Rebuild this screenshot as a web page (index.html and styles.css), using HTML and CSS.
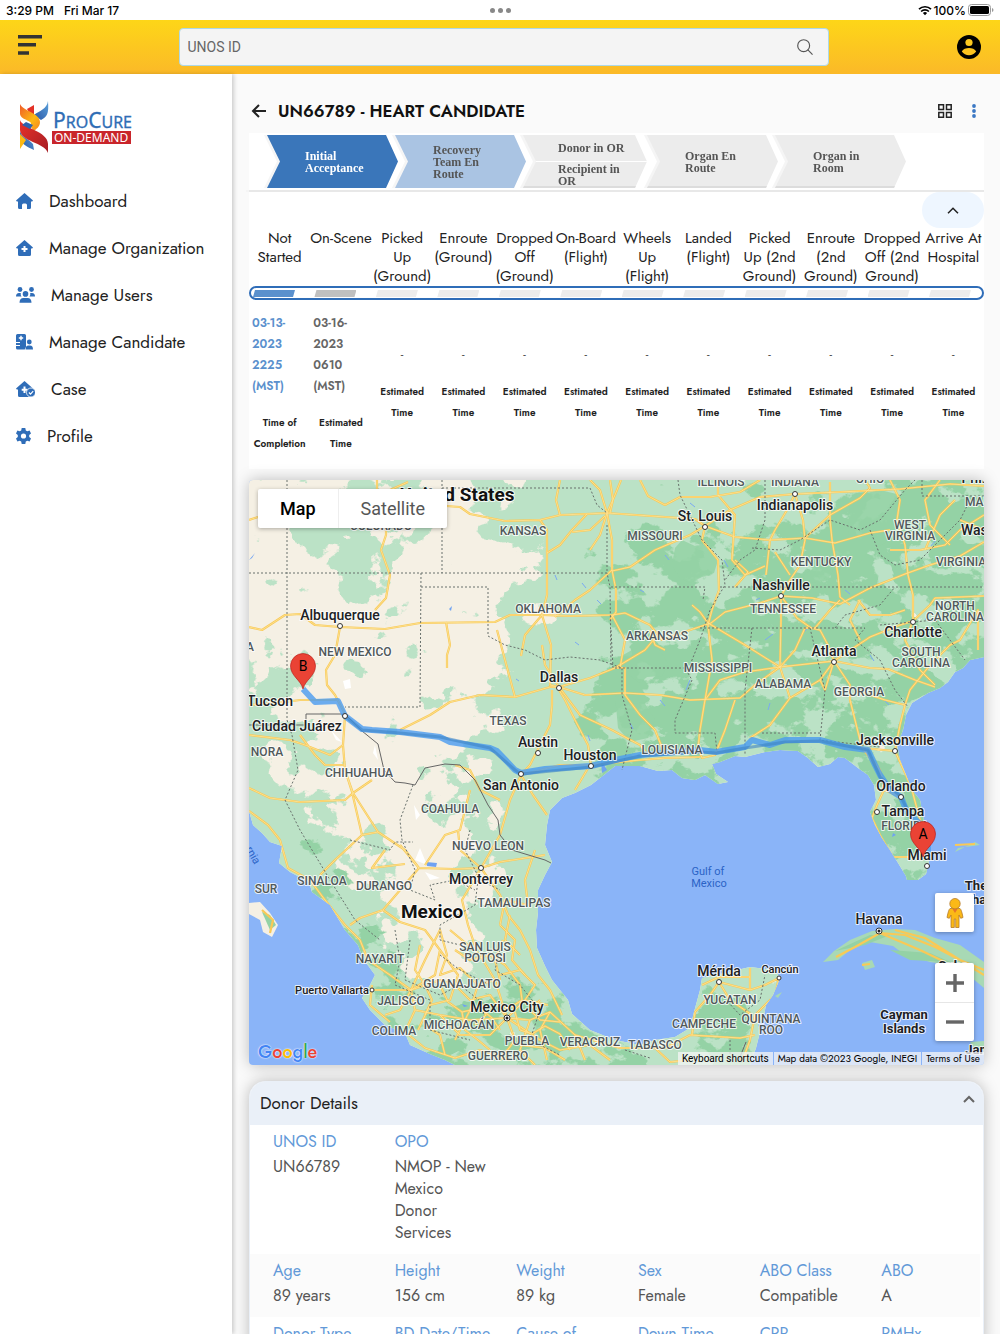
FILE: index.html
```html
<!DOCTYPE html>
<html lang="en">
  <head>
    <title>ProCure On-Demand</title>
    <meta charset="UTF-8">
    <meta name="viewport" content="width=device-width, initial-scale=1">
    <link rel="stylesheet" href="styles.css">
  </head>

  <body>
    <div class="status-bar">
      <div class="status-left"><span>3:29 PM</span><span>Fri Mar 17</span></div>
      <div class="status-dots"><i></i><i></i><i></i></div>
      <div class="status-right">
        <svg width="14" height="11" viewBox="0 0 14 11" fill="none" stroke="#000" stroke-width="1.7">
          <path d="M1 4.2a8.6 8.6 0 0 1 12 0M3.1 6.5a5.6 5.6 0 0 1 7.8 0"/>
          <path d="M7 10.3 4.9 8.1a3 3 0 0 1 4.2 0z" fill="#000" stroke="none"/>
        </svg>
        <span>100%</span>
        <svg width="26" height="12" viewBox="0 0 26 12">
          <rect x=".5" y=".5" width="22" height="11" rx="3" fill="none" stroke="#999"/>
          <rect x="2" y="2" width="19" height="8" rx="1.6"/>
          <path d="M24 4v4q1.500-.6 1.500-2T24 4z" fill="#999"/>
        </svg>
      </div>
    </div>

    <header class="topbar">
      <button class="menu-btn" type="button" aria-label="Menu">
        <svg width="24" height="20" viewBox="0 0 24 20" fill="#333"><path d="M0 0h24v3.400H0zM0 8h18v3.400H0zM0 16.300h11v3.400H0z"/></svg>
      </button>
      <form class="search">
        <input type="text" placeholder="UNOS ID" aria-label="UNOS ID">
        <button type="button" aria-label="Search">
          <svg width="16" height="16" viewBox="0 0 18 18" fill="none" stroke="#555" stroke-width="1.300"><circle cx="7.500" cy="7.500" r="6.700"/><path d="m12 12 5.500 5.500"/></svg>
        </button>
      </form>
      <button class="user-btn" type="button" aria-label="Account">
        <svg width="24" height="24" viewBox="0 0 24 24">
          <circle cx="12" cy="12" r="12"/>
          <circle cx="12" cy="7.500" r="3.600" fill="#fcc81f"/>
          <path d="M4.800 16.500c1-2.300 4.400-3.400 7.200-3.400s6.200 1.100 7.200 3.400a8.700 8.700 0 0 1-14.400 0z" fill="#fcc31f"/>
        </svg>
      </button>
    </header>

    <div class="layout">
      <aside class="sidebar">
        <a class="logo" href="#" aria-label="ProCure On-Demand">
          <svg width="113" height="54" viewBox="0 0 113 54">
            <defs>
              <linearGradient id="lr" x1="0" y1="0" x2="1" y2="1"><stop offset="0" stop-color="#e8322a"/><stop offset="1" stop-color="#a51d24"/></linearGradient>
              <linearGradient id="ly" x1="0" y1="0" x2="1" y2="1"><stop offset="0" stop-color="#ef5a28"/><stop offset=".6" stop-color="#fdb913"/><stop offset="1" stop-color="#f58220"/></linearGradient>
              <linearGradient id="lb" x1="0" y1="1" x2="1" y2="0"><stop offset="0" stop-color="#2b56a5"/><stop offset="1" stop-color="#5aa2dc"/></linearGradient>
            </defs>
            <path d="M29 1C28 9 20 11 15 15l7 5c6-3 8-6 7-19z" fill="url(#lb)"/>
            <path d="M1 29c0 8 8 9 13 15l1 6C8 47 3 44 1 39z" fill="url(#lb)"/>
            <path d="M8 9l7-4v9l-4 0z" fill="#e33127"/>
            <path d="M1 4c3 7 20 9 20 18 0 5-4 7-6 9l-4-5c5-6-9-5-10-12z" fill="url(#ly)"/>
            <path d="M1 34l6 6-6 9z" fill="#fdb913"/>
            <path d="M1 20c2 8 28 11 28 24v9C25 42 2 42 1 30z" fill="url(#lr)"/>
            <path d="M7 22l7 3-3 4-8-4z" fill="#2f62ae"/>
            <text class="logo-name" x="34" y="28"><tspan class="cap">P</tspan>RO<tspan class="cap">C</tspan>URE</text>
            <rect x="33" y="31" width="79" height="13" fill="#c9252b"/>
            <text class="logo-sub" x="35" y="42">ON-DEMAND</text>
          </svg>
        </a>
        <nav>
          <a href="#">
            <svg width="17" height="16" viewBox="0 0 17 16"><path d="M8.500 0 17 7.400l-.8 1.200H15V14.500q0 1.500-1.500 1.500H11v-4q0-1.500-1.500-1.500h-2Q6 10.500 6 12v4H3.500Q2 16 2 14.500V8.600H.8L0 7.400z"/></svg>
            Dashboard
          </a>
          <a href="#">
            <svg width="17" height="16" viewBox="0 0 17 16"><path d="M8.500 0 17 7.400l-.8 1.200H15V14.500q0 1.500-1.500 1.500h-10Q2 16 2 14.500V8.600H.8L0 7.400z"/><path d="M7.500 6h2v2h2v2h-2v2h-2v-2h-2V8h2z" fill="#fff"/></svg>
            Manage Organization
          </a>
          <a href="#">
            <svg width="19" height="16" viewBox="0 0 19 16"><circle cx="4" cy="2.500" r="2.400"/><circle cx="15.500" cy="2.500" r="2.400"/><circle cx="9.500" cy="6.900" r="2.800"/><path d="M0 9.500Q0 6 3 6h1.800q-.5 2 .7 3.500zM19 9.500Q19 6 16 6h-1.800q.5 2-.7 3.500zM3.500 15.700q0-4.700 4-4.700h4q4 0 4 4.700z"/></svg>
            Manage Users
          </a>
          <a href="#">
            <svg width="17" height="16" viewBox="0 0 17 16"><path d="M1.500 0h7Q10 0 10 1.500V13q-1 1-1.200 2.500H1.500Q0 15.500 0 14V12h4v-1H0V9h4V8H0V1.500Q0 0 1.500 0z"/><path d="M4.300 1.800h1.400v1.500h1.500v1.400H5.700v1.500H4.300V4.700H2.800V3.300h1.500z" fill="#fff"/><circle cx="13.300" cy="8" r="2.400"/><path d="M9.500 15.500q0-4 3-4h1.500q3 0 3 4z"/></svg>
            Manage Candidate
          </a>
          <a href="#">
            <svg width="19" height="16" viewBox="0 0 19 16"><path d="M8.500 0 17 7.400l-.8 1.200H15V16H3.500Q2 16 2 14.500V8.600H.8L0 7.400z"/><path d="M7.500 5.500h2v2.200h2v2h-2V12h-2V9.700h-1.800v-2h1.800z" fill="#fff"/><circle cx="15" cy="11.500" r="4.500" stroke="#fff" stroke-width=".8"/><path d="m12.900 11.500 1.600 1.600 2.700-3" fill="none" stroke="#fff" stroke-width="1.200"/></svg>
            Case
          </a>
          <a href="#">
            <svg width="15" height="16" viewBox="0 0 15 16"><path d="M5.700 0h3.600l.5 2.400 1.500.9 2.300-.8 1.400 3-1.800 1.600v1.800l1.800 1.600-1.400 3-2.300-.8-1.500.9-.5 2.400H5.700l-.5-2.400-1.500-.9-2.300.8-1.400-3 1.800-1.600V7.100L0 5.500l1.400-3 2.300.8 1.500-.9z"/><circle cx="7.500" cy="8" r="2.600" fill="#fff"/></svg>
            Profile
          </a>
        </nav>
      </aside>

      <main>
        <div class="page-head">
          <a class="back" href="#" aria-label="Back"><svg width="15" height="14" viewBox="0 0 15 14" fill="none" stroke="#222" stroke-width="2"><path d="M15 7H2M8 1 2 7l6 6"/></svg></a>
          <h1>UN66789 - HEART CANDIDATE</h1>
          <button type="button" aria-label="Grid view"><svg width="14" height="14" viewBox="0 0 14 14" fill="none" stroke="#222" stroke-width="1.500"><path d="M.8.8h4.700v4.700H.8zM8.500.8h4.700v4.700H8.500zM.8 8.500h4.700v4.700H.8zM8.500 8.500h4.700v4.700H8.500z"/></svg></button>
          <button type="button" aria-label="More"><svg width="4" height="14" viewBox="0 0 4 14" fill="#3b78c4"><circle cx="2" cy="2" r="1.900"/><circle cx="2" cy="7" r="1.900"/><circle cx="2" cy="12" r="1.900"/></svg></button>
        </div>

        <section class="progress">
          <ol class="steps">
            <li class="step done"><span>Initial<br>Acceptance</span></li>
            <li class="step current"><span>Recovery<br>Team En<br>Route</span></li>
            <li class="step split"><span>Donor in OR</span><span>Recipient in<br>OR</span></li>
            <li class="step"><span>Organ En<br>Route</span></li>
            <li class="step"><span>Organ in<br>Room</span></li>
          </ol>
          <div class="collapse">
            <button type="button" aria-label="Collapse"><svg width="12" height="7" viewBox="0 0 12 7" fill="none" stroke="#222" stroke-width="1.500"><path d="m1 6.300 5-5 5 5"/></svg></button>
          </div>
          <table class="timeline">
            <thead>
              <tr>
                <th>Not<br>Started</th>
                <th>On-Scene</th>
                <th>Picked<br>Up<br>(Ground)</th>
                <th>Enroute<br>(Ground)</th>
                <th>Dropped<br>Off<br>(Ground)</th>
                <th>On-Board<br>(Flight)</th>
                <th>Wheels<br>Up<br>(Flight)</th>
                <th>Landed<br>(Flight)</th>
                <th>Picked<br>Up (2nd<br>Ground)</th>
                <th>Enroute<br>(2nd<br>Ground)</th>
                <th>Dropped<br>Off (2nd<br>Ground)</th>
                <th>Arrive At<br>Hospital</th>
              </tr>
            </thead>
            <tbody>
              <tr>
                <td colspan="12">
                  <div class="track"><i class="done"></i><i class="current"></i><i></i><i></i><i></i><i></i><i></i><i></i><i></i><i></i><i></i><i></i></div>
                </td>
              </tr>
              <tr class="times">
                <td><p class="date done">03-13-<br>2023<br>2225<br>(MST)</p><p class="note">Time of<br>Completion</p></td>
                <td><p class="date">03-16-<br>2023<br>0610<br>(MST)</p><p class="note">Estimated<br>Time</p></td>
                <td><p class="empty">-</p><p class="note">Estimated<br>Time</p></td>
                <td><p class="empty">-</p><p class="note">Estimated<br>Time</p></td>
                <td><p class="empty">-</p><p class="note">Estimated<br>Time</p></td>
                <td><p class="empty">-</p><p class="note">Estimated<br>Time</p></td>
                <td><p class="empty">-</p><p class="note">Estimated<br>Time</p></td>
                <td><p class="empty">-</p><p class="note">Estimated<br>Time</p></td>
                <td><p class="empty">-</p><p class="note">Estimated<br>Time</p></td>
                <td><p class="empty">-</p><p class="note">Estimated<br>Time</p></td>
                <td><p class="empty">-</p><p class="note">Estimated<br>Time</p></td>
                <td><p class="empty">-</p><p class="note">Estimated<br>Time</p></td>
              </tr>
            </tbody>
          </table>
        </section>

        <section class="map">
          <svg class="map-canvas" viewBox="249 480 735 585" preserveAspectRatio="xMidYMid slice">
            <defs>
              <!-- vegetation: the more opaque the shape, the denser the speckle -->
              <filter id="grass" filterUnits="userSpaceOnUse" x="200" y="430" width="840" height="690" color-interpolation-filters="sRGB">
                <feTurbulence type="fractalNoise" baseFrequency=".03 .035" numOctaves="5" seed="8"/>
                <feColorMatrix values="0 0 0 0 0  0 0 0 0 0  0 0 0 0 0  1 0 0 0 0" result="noise"/>
                <feGaussianBlur in="SourceAlpha" stdDeviation="8" result="area"/>
                <feComposite in="noise" in2="area" operator="arithmetic" k2="1" k3=".8" k4="-.5"/>
                <feComponentTransfer result="mask"><feFuncA type="linear" slope="30" intercept="-13"/></feComponentTransfer>
                <feFlood flood-color="#bbe2c6"/>
                <feComposite in2="mask" operator="in"/>
              </filter>
              <filter id="forest" filterUnits="userSpaceOnUse" x="200" y="430" width="840" height="690" color-interpolation-filters="sRGB">
                <feTurbulence type="fractalNoise" baseFrequency=".03 .04" numOctaves="5" seed="21"/>
                <feColorMatrix values="0 0 0 0 0  0 0 0 0 0  0 0 0 0 0  1 0 0 0 0" result="noise"/>
                <feGaussianBlur in="SourceAlpha" stdDeviation="10" result="area"/>
                <feComposite in="noise" in2="area" operator="arithmetic" k2="1" k3=".8" k4="-.5"/>
                <feComponentTransfer result="mask"><feFuncA type="linear" slope="20" intercept="-8.600"/></feComponentTransfer>
                <feFlood flood-color="#94d2a5"/>
                <feComposite in2="mask" operator="in"/>
              </filter>
              <path id="mainland" d="M249 480H984V657L970 660 963 668 955 672 948 682 940 688 928 693 920 698 912 703 906 715 903 730 897 745 900 760 906 775 912 790 920 800 924 822 930 845 929 862 926 874 918 880 907 880 906 876 895 858 890 850 882 838 875 825 870 812 876 800 874 785 868 775 858 768 845 758 838 757 830 764 818 767 808 758 798 751 780 750 765 752 745 757 735 756 720 762 712 764 716 774 728 782 718 784 705 775 695 780 682 778 672 770 658 771 640 766 615 766 605 774 591 785 575 793 562 798 550 810 547 825 545 845 552 862 545 875 538 890 538 912 536 930 537 948 545 966 552 980 568 1000 572 1014 590 1030 615 1040 640 1045 655 1040 675 1037 690 1028 694 1012 700 990 702 978 720 974 750 967 775 970 780 978 773 995 766 1005 764 1015 758 1025 760 1032 756 1048 750 1065H455L445 1060 430 1054 410 1045 405 1033 385 1025 370 1010 362 998 370 985 375 975 364 960 358 945 345 930 330 905 312 892 309 882 290 872 279 863 282 846 270 842 262 833 253 825 249 811z"/>
              <clipPath id="land"><use href="#mainland"/></clipPath>
              <g id="roads">
                <path d="M249 520 258 517M377 480V500L390 490 408 482M386 525 386 535 381 550 390 575 386 598 375 610M340 627 335 655 326 670 327 685 335 695 345 714M249 627 262 630 285 615 300 614 315 625 340 627 385 629 420 623 495 622 510 615 542 615 570 616 612 615 625 613 650 625 662 640 690 630 711 623 725 612 760 603 781 596 812 598 840 604 870 588 905 574 930 565 960 556 984 542"/>
                <path d="M446 506 460 507 470 514 505 521 540 520 560 515 585 514 607 513 695 519 705 526 730 510 760 497 795 494 840 492 900 489 950 484 984 486M540 520 547 530 547 595 542 615M547 553 560 545 572 530 587 514M572 532 590 530 605 516M607 513 612 540 612 570 616 590 616 612 610 620M590 480 600 490 607 513 615 495 621 480M555 617 575 600 590 590 612 570M612 571 630 567 655 550 690 535 705 526M542 615 525 635 521 656M542 615 551 645 550 685 559 687M446 622 450 645 447 655 447 668"/>
                <path d="M400 730 430 715 450 702 480 695 515 697 550 687 559 687 590 678 615 668 645 650 660 632M559 687 585 695 625 693 660 695 690 700 740 698 755 685 780 667 834 661 870 668 888 669 915 680 935 687M552 690 552 705 550 725 540 745 530 765 521 775M559 690 565 700 575 720 588 745 591 765M521 775 560 765 591 765 640 760 665 758 700 757M521 775 533 795 547 815M521 775 510 800 500 835 481 868"/>
                <path d="M612 668 625 668 625 695 640 715 655 730 665 755M650 630 655 645 665 650M705 526 702 540 718 560 719 590 712 610 708 625 712 660 705 700 700 730 698 748 702 758 715 755 725 730 735 700M692 605 700 612 708 623 745 645 780 667 790 698M781 596V620L780 667M795 494 787 510 775 530 770 540 766 575M795 494 803 520 805 540 800 565 790 580 781 596M705 526 735 537 770 540 805 538 835 543 870 533 890 530M830 482 830 520 832 540 838 575 840 597 850 605M840 600 830 610 815 628 805 628 795 650 780 667M781 596 797 618 811 628 820 630 828 645 834 661M834 661 820 680 790 698 770 725 750 738M834 661 850 685 850 700 855 720 862 748 895 751M834 661 870 637 900 625 913 621 930 605 935 598 984 596"/>
                <path d="M805 538 830 515 860 498 870 488 865 480M890 480 900 500 897 520 905 545 908 575 913 595 913 621 905 640 920 670 935 685M905 705 910 690 930 665 950 645 960 640 978 610 978 650M858 600 870 615 890 615 905 610M890 550 920 550 945 545 960 530 984 515M984 530 960 520M834 661 825 690 820 680M895 751 900 725 905 705 885 700 855 690M895 751 906 775 912 790 920 820 928 850M862 748 880 770 884 790 877 805 872 818 880 835 893 857 912 857M884 790 901 797M680 497 710 497 740 492 760 480M718 480V495L735 515 732 560 745 575 765 566M735 587 748 572 735 560M775 552 790 575"/>
                <path d="M345 716 343 745 345 770 353 793 378 832 405 850 419 868 455 869 481 868 500 862 545 855M249 788 270 798 300 802 345 800 353 793 372 780M345 770 352 792 362 835 335 860 320 875M362 835 378 832M419 868 383 910 360 918 350 925M383 910 400 922 425 930 440 950 435 975 411 990M385 850 372 868 405 864M425 865 445 835 460 830 470 790M419 868 400 845M481 868 460 850 458 830M481 868 462 900 468 925 478 955M481 868 500 895 508 915 520 930 530 950 538 975 550 990 562 1015"/>
                <path d="M249 811 268 825 280 840 288 868 310 880 325 900 345 925 360 940 368 960 390 975 411 990 400 1010 385 1015M249 735 290 740 305 745 330 755 343 745M300 735 315 755 325 765 345 765M249 705 285 702 300 700 338 700M510 915 505 940 520 955M535 850 525 880 528 905 505 900 500 925M262 905 275 920 270 932 262 918M500 800 480 790 470 770 455 765"/>
                <path d="M411 990 440 980 455 985 470 1000 490 995 507 1018 530 1020 550 1012 575 1035 620 1048 665 1048 690 1035 740 1038 755 1035M411 990 425 960 440 930 447 955 440 975 460 968 478 985 495 980 507 1018 515 1040 500 1060M411 990 415 1010 440 1015 470 1020 507 1018 525 1000 535 985 520 970 500 975M411 990 385 990 370 990M415 1010 405 1032 425 1048 455 1058 480 1050 510 1060M507 1018 540 1040 560 1050 590 1045 610 1060M507 1018 490 1035 460 1035 440 1015M550 1012 540 1030 547 1060M478 985 470 1010 455 1040M525 1000 548 1005M575 1035 585 1060M655 1048 670 1062 690 1060M440 950 458 975 450 1000 430 1005 418 1030M495 980 480 955 450 930M530 1020 520 1050 535 1065"/>
                <path d="M372 985 370 1005 390 1022M719 982 710 995 695 1012 692 1035M719 982 750 990 765 985 779 978 775 995 755 1015 750 1040 742 1062M719 982 730 1000 752 1015M750 968V990M702 985 719 977 750 977M440 985 448 1002 462 1012 480 1008 492 1018 500 1030M515 1012 520 1030 532 1034 545 1026 560 1034 570 1050M420 945 415 970 425 985M455 950 470 960 490 955 505 965 520 985M500 925 515 940 512 960 525 975"/>
                <path d="M610 480 613 500 610 513M640 480 648 496 665 505 680 497M607 513 600 535 590 550M560 480 556 500 560 515M497 630 505 660 515 697M559 687 545 665 542 645M559 687 580 715 612 730 640 745 650 757M590 765 575 790M940 480 925 500 930 525 950 545M955 500 940 515 925 550M860 640 850 620 860 600M705 700 720 680 745 672 780 667M612 615 625 640 620 668"/>
                <path d="M425 985 432 1000 425 1015M462 1012 465 1030 478 1040 490 1050M540 1000 530 1010 540 1020 560 1022M520 1045 545 1048 565 1060M425 1025 440 1035 445 1055M503 940 495 960 500 980M520 985 522 1000 510 1008 495 1005M480 1000 486 1015 475 1025"/>
              </g>
            </defs>

            <rect x="249" y="480" width="735" height="585" fill="#8ab4f8"/>
            <use href="#mainland" fill="#f5f0e4"/>
            <g clip-path="url(#land)">
              <g filter="url(#grass)">
                <path d="M540 440H1040V1100H640V950H800V900H500L510 800 490 770 500 730 530 690 525 640 560 610 530 580 565 550 520 520z"/>
                <path d="M200 730 290 790 315 840 370 910 400 970 460 980 490 940 500 880 560 840V940L640 1000 700 1000V1110H400L200 900z"/>
                <path fill-opacity=".55" d="M470 440H560V700L500 720 480 660 530 640 490 600 560 560 480 540zM380 440H420V530L390 560 395 610 360 620 340 570 290 550V480L340 500zM200 660 310 650 325 690 270 700 340 760 380 800 430 960 300 940 200 760zM440 740 510 730 520 960H450L450 870 410 790z"/>
                <path fill-opacity=".3" d="M200 430H540V760H200z"/>
              </g>
              <g filter="url(#forest)">
                <path fill-opacity=".5" d="M580 560 640 520 700 540 1040 430V900H560L590 760 570 700 610 640 600 600z"/>
                <path fill-opacity=".22" d="M560 430H1040V900H560zM600 580 640 560 700 640 640 760H590z"/>
                <path fill-opacity=".22" d="M850 430H1000V560L880 600 850 640 760 650 750 740 640 750 610 700 640 630 720 600 820 560z"/>
                <path fill-opacity=".55" d="M290 810 330 850 370 900 410 960 430 1000 560 960 600 1040 660 1000V1110H430L360 990 300 870z"/>
                <path fill-opacity=".75" d="M690 995 745 985 765 1080H695z"/>
              </g>
              <path fill="#94d2a5" opacity=".85" d="M675 548 682 540 695 546 706 544 718 560 714 573 702 577 690 583 679 577 672 564zM623 655 634 649 650 645 661 652 668 664 662 676 647 677 640 683 628 674zM850 505 862 494 880 490 905 496 898 520 890 540 868 552 860 562 835 565 828 580 806 584 800 578 822 562 830 548 848 538zM615 695 632 704 644 702 655 720 648 738 630 742 618 728z"/>
              <path fill="#fff" d="M343 681 350 679 351 688 345 689zM331 730 342 742 336 740zM375 745 378 760 373 753zM414 805 420 815 416 820zM420 848 427 865 415 860zM425 872 440 878 430 880z"/>
              <path fill="#6fa2f2" d="M426 862 437 863 436 867 427 866zM249 560 255 553 252 558zM449 609 452 606 451 611zM601 760 607 770 602 773zM462 1004 468 1006 464 1007zM893 833 896 835 892 837z"/>
              <path fill="none" stroke="#7aa9f3" d="M555 575 557 580M582 583 586 588M597 600 601 604M575 642 579 645M516 679 519 681M588 735 590 741M665 555 669 560M690 503 695 507M724 560 728 567M765 640 773 634M800 636 810 626M768 710 770 703M845 590 850 594M884 700 889 705M690 680 686 690M660 700 665 706M756 600 760 598M640 590 644 592M925 620 928 616M870 655 874 661M936 540 931 546M630 723 633 729"/>
            </g>
            <path fill="#f5f0e4" d="M249 903 260 902 270 913 278 925 272 937 263 932 260 920 249 914z"/>
            <path fill="#94d2a5" d="M262 912 270 915 276 925 270 930z"/>
            <path fill="#a8d9b5" d="M823 962 834 951 850 940 872 931 895 929 915 930 935 938 960 945 984 962V988L972 978 955 966 930 962 905 955 893 946 870 942 850 950 838 960zM862 963 872 960 875 967 865 970zM775 996 782 992 778 998zM955 852 975 842 980 845 958 848zM970 1042 984 1041V1050H975z"/>
            <path fill="#94d2a5" d="M835 951 870 935 890 935 865 945zM890 950 930 953 950 962 910 960z"/>
            <g clip-path="url(#land)">
              <use href="#roads" class="road"/>
              <use href="#roads" class="road-core"/>
            </g>
            <path class="road" d="M836 957 855 947 880 933 905 935 935 947 960 960 984 970M880 933 920 950 945 962M895 930 925 938 984 975M262 910 273 920 270 933M955 845 975 844M862 965 870 964"/>

            <g class="border">
              <path d="M287 480V720L292 735 298 770 285 800 300 830 330 880 355 920 380 940M249 573H607V523M442 480V573M442 488H590L597 505 607 513M421 573 420 707H345M421 587H488V636L505 645 525 650 545 660 570 657 600 660 611 664 610 587 607 573M611 587H705L703 600M611 630 613 668H685L692 680 675 720 675 733H715L717 752M611 664 622 668V695L632 730 622 770"/>
              <path d="M678 480 680 495 702 540 722 560 725 585 710 610 700 640 690 665M720 587H984M700 628H865L855 640 880 660 895 690 908 707M752 628 745 690V755M810 628 825 690 820 740 880 747M765 480V520L755 550 740 560 725 580M752 548 780 550 800 540 830 520 860 530 880 520 905 490 915 480M870 530 880 555 895 565 920 560 960 520 970 500M922 480V496H984M835 628 845 615 880 605 895 587M880 625 935 620 965 660M762 733H820"/>
              <path d="M413 785 400 820 402 840 415 870 410 890 435 900 430 885 455 880 475 890M350 840 390 850 395 842 413 842M470 830 465 850 480 880 500 890M478 880 475 905 440 925 440 940 460 945M395 930 400 960 395 985 430 1000 430 1030 470 1040M410 940 405 980 440 995 460 985 485 1005 480 1030M500 950 495 970 520 985 540 1010 530 1040 560 1055M728 1002 740 1015 760 1000 765 975M730 1040V1062M440 955 460 970 490 985M625 1050 650 1058"/>
            </g>
            <path class="frontier" d="M249 725H306V714H345L362 731 378 744 384 770 395 782 405 783 415 785 425 768 445 764 460 765 475 780 488 805 498 820 500 835 512 850 545 860 551 863M738 1062 746 1042"/>

            <path class="route" d="M303 689 315 702 338 701 345 716 362 729 372 730 400 732 440 737 450 742 490 748 497 751 515 770 521 773 545 769 591 766 620 759 640 755 700 750 716 752 745 747 752 740 770 745 785 740 820 740 845 747 868 750 875 765 880 775 890 790 901 797 907 812 918 822 928 840 928 856"/>
            <path class="route-core" d="M345 716 362 730 400 733 440 737 490 748 515 770 521 774 591 767 640 756 700 752 716 753 745 748 785 742 820 741 868 750 880 777 901 797 910 815"/>

            <g class="dots">
              <circle cx="340" cy="626" r="2.500"/><circle cx="345" cy="716" r="2.500"/><circle cx="559" cy="688" r="2.500"/><circle cx="538" cy="753" r="2.500"/><circle cx="591" cy="766" r="2.500"/><circle cx="521" cy="774" r="2.500"/><circle cx="705" cy="527" r="2.500"/><circle cx="795" cy="494" r="2.500"/><circle cx="781" cy="596" r="2.500"/><circle cx="913" cy="622" r="2.500"/><circle cx="834" cy="662" r="2.500"/><circle cx="895" cy="751" r="2.500"/><circle cx="901" cy="797" r="2.500"/><circle cx="877" cy="812" r="2.500"/><circle cx="927" cy="866" r="2.500"/><circle cx="481" cy="868" r="2.500"/><circle cx="719" cy="982" r="2.500"/><circle cx="779" cy="978" r="2"/><circle cx="372" cy="990" r="2"/><circle cx="507" cy="1018" r="3"/><circle cx="879" cy="931" r="3"/>
            </g>
            <g fill="#202124"><circle cx="507" cy="1018" r="1.500"/><circle cx="879" cy="931" r="1.500"/></g>

            <g class="state">
              <text x="381" y="530">COLORADO</text><text x="523" y="535">KANSAS</text><text x="655" y="540">MISSOURI</text><text x="721" y="486">ILLINOIS</text><text x="795" y="486">INDIANA</text><text x="870" y="483">OHIO</text>
              <text x="910" y="529">WEST</text><text x="910" y="540">VIRGINIA</text><text x="821" y="566">KENTUCKY</text><text x="961" y="566">VIRGINIA</text><text x="997" y="506">MARYLAND</text>
              <text x="548" y="613">OKLAHOMA</text><text x="355" y="656">NEW MEXICO</text><text x="657" y="640">ARKANSAS</text><text x="783" y="613">TENNESSEE</text><text x="955" y="610">NORTH</text><text x="955" y="621">CAROLINA</text>
              <text x="921" y="656">SOUTH</text><text x="921" y="667">CAROLINA</text><text x="718" y="672">MISSISSIPPI</text><text x="783" y="688">ALABAMA</text><text x="859" y="696">GEORGIA</text><text x="508" y="725">TEXAS</text><text x="672" y="754">LOUISIANA</text><text x="905" y="830">FLORIDA</text>
              <text x="359" y="777">CHIHUAHUA</text><text x="450" y="813">COAHUILA</text><text x="488" y="850">NUEVO LEON</text><text x="322" y="885">SINALOA</text><text x="384" y="890">DURANGO</text><text x="514" y="907">TAMAULIPAS</text><text x="485" y="951">SAN LUIS</text><text x="485" y="962">POTOSI</text><text x="380" y="963">NAYARIT</text>
              <text x="462" y="988">GUANAJUATO</text><text x="401" y="1005">JALISCO</text><text x="394" y="1035">COLIMA</text><text x="459" y="1029">MICHOACÁN</text><text x="527" y="1045">PUEBLA</text><text x="590" y="1046">VERACRUZ</text><text x="498" y="1060">GUERRERO</text><text x="655" y="1049">TABASCO</text>
              <text x="730" y="1004">YUCATAN</text><text x="704" y="1028">CAMPECHE</text><text x="771" y="1023">QUINTANA</text><text x="771" y="1034">ROO</text>
              <text x="267" y="756">NORA</text><text x="266" y="893">SUR</text><text x="250" y="651">A</text>
            </g>
            <g class="city">
              <text x="340" y="620">Albuquerque</text><text x="270" y="706">Tucson</text><text x="297" y="731">Ciudad Juárez</text><text x="559" y="682">Dallas</text><text x="538" y="747">Austin</text><text x="590" y="760">Houston</text><text x="521" y="790">San Antonio</text>
              <text x="705" y="521">St. Louis</text><text x="795" y="510">Indianapolis</text><text x="781" y="590">Nashville</text><text x="913" y="637">Charlotte</text><text x="834" y="656">Atlanta</text><text x="895" y="745">Jacksonville</text><text x="901" y="791">Orlando</text><text x="903" y="816">Tampa</text><text x="927" y="860">Miami</text>
              <text x="481" y="884">Monterrey</text><text x="507" y="1012">Mexico City</text><text x="879" y="924">Havana</text><text x="719" y="976">Mérida</text><text x="998" y="535">Washington</text><text x="1000" y="483">Philadelphia</text>
              <text class="small" x="332" y="994">Puerto Vallarta</text><text class="small" x="780" y="973">Cancún</text>
              <text class="bold" x="904" y="1019">Cayman</text><text class="bold" x="904" y="1033">Islands</text><text class="bold" x="976" y="890">The</text><text class="bold" x="984" y="904">Bahamas</text><text class="bold" x="953" y="970">Cuba</text><text class="bold" x="990" y="1054">Jamaica</text>
            </g>
            <g class="country"><text x="457" y="501">United States</text><text x="432" y="918">Mexico</text></g>
            <g class="sea"><text x="708" y="875">Gulf of</text><text x="709" y="887">Mexico</text><text transform="translate(250 857) rotate(60)">rnia</text></g>

            <g class="pin">
              <path d="M303 689c-2-9-12.500-13-12.500-23a12.500 12.500 0 0 1 25 0c0 10-10.500 14-12.500 23z"/><text x="303" y="671">B</text>
              <path d="M923 857c-2-9-12.500-13-12.500-23a12.500 12.500 0 0 1 25 0c0 10-10.500 14-12.500 23z"/><text x="923" y="839">A</text>
            </g>
          </svg>

          <div class="map-type">
            <button class="active" type="button">Map</button>
            <button type="button">Satellite</button>
          </div>
          <div class="map-tools">
            <button class="pegman" type="button" aria-label="Street View">
              <svg width="18" height="30" viewBox="0 0 18 30" fill="#fbb917" stroke="#b57a28" stroke-width=".8">
                <path d="M4 10.500h10q1.500 1 3 9l-2.300.8L13 17v12.500H9.700V21H8.300v8.500H5V17l-1.700 3.300L1 19.500q1.500-8 3-9z"/>
                <circle cx="9" cy="5.700" r="5.200"/>
                <path d="M6.500 11h5L9 15z" fill="#e5762b" stroke="none"/>
              </svg>
            </button>
            <div class="zoom">
              <button type="button" aria-label="Zoom in"><svg width="18" height="18" viewBox="0 0 18 18" fill="#666"><path d="M7.300 0h3.400v7.300H18v3.400h-7.300V18H7.300v-7.300H0V7.300h7.300z"/></svg></button>
              <button type="button" aria-label="Zoom out"><svg width="18" height="18" viewBox="0 0 18 18" fill="#666"><path d="M0 7.300h18v3.400H0z"/></svg></button>
            </div>
          </div>
          <a class="google" href="#" aria-label="Google"><span class="b">G</span><span class="r">o</span><span class="y">o</span><span class="b">g</span><span class="g">l</span><span class="r">e</span></a>
          <div class="map-legal">
            <button type="button">Keyboard shortcuts</button>
            <span>Map data ©2023 Google, INEGI</span>
            <a href="#">Terms of Use</a>
          </div>
        </section>

        <section class="donor">
          <div class="donor-head">
            <h2>Donor Details</h2>
            <button type="button" aria-label="Collapse"><svg width="12" height="8" viewBox="0 0 12 8" fill="none" stroke="#666" stroke-width="2"><path d="m1 7 5-5 5 5"/></svg></button>
          </div>
          <dl class="donor-row">
            <div><dt>UNOS ID</dt><dd>UN66789</dd></div>
            <div><dt>OPO</dt><dd>NMOP - New<br>Mexico<br>Donor<br>Services</dd></div>
          </dl>
          <dl class="donor-row">
            <div><dt>Age</dt><dd>89 years</dd></div>
            <div><dt>Height</dt><dd>156 cm</dd></div>
            <div><dt>Weight</dt><dd>89 kg</dd></div>
            <div><dt>Sex</dt><dd>Female</dd></div>
            <div><dt>ABO Class</dt><dd>Compatible</dd></div>
            <div><dt>ABO</dt><dd>A</dd></div>
          </dl>
          <dl class="donor-row">
            <div><dt>Donor Type</dt></div>
            <div><dt>BD Date/Time</dt></div>
            <div><dt>Cause of</dt></div>
            <div><dt>Down Time</dt></div>
            <div><dt>CPR</dt></div>
            <div><dt>PMHx</dt></div>
          </dl>
        </section>
      </main>
    </div>
  </body>
</html>
```

FILE: styles.css
```css
* {
  box-sizing: border-box;
}

body {
  display: flex;
  flex-direction: column;
  height: 100vh;
  margin: 0;
  overflow: hidden;
  font-family: Jost, Lato, sans-serif;
  color: #222;
  background-color: #fafafa;
}

button {
  padding: 0;
  border: none;
  background: none;
  cursor: pointer;
}

svg {
  display: block;
}

a {
  color: inherit;
  text-decoration: none;
}

h1, h2, p, ol, dl, dd {
  margin: 0;
  padding: 0;
}

/* status bar */
.status-bar {
  display: grid;
  grid-template-columns: 1fr auto 1fr;
  align-items: center;
  flex: none;
  height: 20px;
  padding: 0 6px;
  background-color: #fff;
  font: 500 12px Inter, sans-serif;
  color: #000;
}

.status-left {
  display: flex;
  gap: 10px;
}

.status-dots {
  display: flex;
  gap: 3px;
}

.status-dots i {
  width: 5px;
  height: 5px;
  border-radius: 50%;
  background-color: #888;
}

.status-right {
  display: flex;
  justify-content: flex-end;
  align-items: center;
  gap: 2px;
}

/* top bar */
.topbar {
  display: flex;
  justify-content: space-between;
  align-items: center;
  flex: none;
  height: 54px;
  padding: 0 19px 0 18px;
  background: linear-gradient(#fdd618, #fbb928);
}

.menu-btn {
  width: 32px;
  padding-bottom: 4px;
}

.search {
  display: flex;
  align-items: center;
  width: 65vw;
  height: 38px;
  padding: 0 15px 0 8px;
  border: 1px solid #add8e6;
  border-radius: 4px;
  background-color: #f4f4f4;
}

.search input {
  flex: 1;
  padding: 0;
  border: none;
  outline: none;
  background: none;
  font: 14px Roboto, sans-serif;
}

.search input::placeholder {
  color: #666;
}

/* layout */
.layout {
  display: flex;
  flex: 1;
  min-height: 0;
}

.sidebar {
  flex: none;
  width: 232px;
  background-color: #fff;
  box-shadow: 2px 0 4px rgba(0, 0, 0, 0.18);
}

.logo {
  display: block;
  padding: 26px 19px 23px;
}

.logo-name {
  font: 16px "Noto Sans", sans-serif;
  fill: #2f6db5;
  stroke: #2f6db5;
  stroke-width: 0.3px;
}

.logo-name .cap {
  font-size: 21px;
}

.logo-sub {
  font: 12px "Noto Sans", sans-serif;
  fill: #fff;
}

.sidebar nav a {
  display: flex;
  align-items: center;
  gap: 16px;
  height: 47px;
  padding-left: 16px;
  font-size: 17px;
}

.sidebar nav svg {
  fill: #2f6db8;
}

main {
  flex: 1;
  min-width: 0;
  padding: 0 16px 0 17px;
  overflow: hidden;
}

.page-head {
  display: flex;
  align-items: center;
  gap: 12px;
  height: 59px;
  padding: 15px 8px 0 2px;
}

.page-head h1 {
  flex: 1;
  font-size: 17px;
  font-weight: 600;
  color: #111;
}

.page-head button + button {
  margin-left: 8px;
}

/* progress */
.progress {
  background-color: #fff;
}

.steps {
  display: flex;
  height: 59px;
  padding: 2px 0 2px 18px;
  border-bottom: 2px solid #e8e8e8;
  list-style: none;
  font: 700 12px/12px "Liberation Serif", serif;
  color: #555;
  filter: drop-shadow(-3px 0 0 #f5f5f5);
}

.step {
  display: flex;
  align-items: center;
  width: 131px;
  margin-right: -3px;
  padding-left: 38px;
  background-color: #ececec;
  box-shadow: inset 0 -2px #dcdcdc;
  clip-path: polygon(0 0, calc(100% - 12px) 0, 100% 50%, calc(100% - 12px) 100%, 0 100%, 13px 50%);
}

.step.done {
  background-color: #3a76ba;
  box-shadow: none;
  color: #fff;
}

.step.current {
  background-color: #aac4e3;
  box-shadow: none;
}

.step.split {
  flex-direction: column;
  align-items: stretch;
  width: 124px;
  margin-right: 0;
  padding: 0;
}

.step.split span {
  display: flex;
  align-items: center;
  flex: 1;
  padding-left: 35px;
}

.step.split span + span {
  border-top: 1px solid #fff;
}

.collapse {
  display: flex;
  justify-content: flex-end;
}

.collapse button {
  display: flex;
  justify-content: center;
  align-items: center;
  width: 62px;
  height: 36px;
  border-radius: 18px;
  background-color: #eef6ff;
}

.timeline {
  width: 100%;
  table-layout: fixed;
  border-collapse: collapse;
}

.timeline th {
  padding: 1px 0 0;
  vertical-align: top;
  font-size: 15px;
  font-weight: 400;
  line-height: 19px;
  white-space: nowrap;
}

.timeline td {
  padding: 0;
}

.track {
  display: flex;
  justify-content: space-between;
  height: 14px;
  padding: 2px 11px 1px 2px;
  border: 2px solid #2f6db8;
  border-radius: 7px;
}

.track i {
  width: 42px;
  background-color: #ececec;
  clip-path: polygon(2px 0, 100% 0, 40px 100%, 0 100%);
}

.track .done {
  background-color: #5a90cd;
}

.track .current {
  background-color: #c0c0c0;
}

.times td {
  height: 169px;
  padding-bottom: 2px;
  text-align: center;
  line-height: 21px;
}

.date {
  padding-left: 3px;
  text-align: left;
  font-size: 12px;
  font-weight: 600;
  color: #666;
}

.date.done {
  color: #5a90cd;
}

.empty {
  font-size: 12px;
  color: #555;
}

.note {
  margin-top: 15px;
  font-size: 10px;
  font-weight: 600;
}

/* map */
.map {
  position: relative;
  margin: 11px 0 16px;
  border-radius: 4px;
  overflow: hidden;
  box-shadow: 0 0 15px rgba(0, 0, 0, 0.25);
}

.map-canvas {
  width: 100%;
}

.road {
  fill: none;
  stroke: #f9c956;
  stroke-width: 2.2;
  stroke-linejoin: round;
}

.road-core {
  fill: none;
  stroke: #fde49b;
  stroke-width: 0.8;
}

.border {
  fill: none;
  stroke: #68706c;
  stroke-dasharray: 2 2;
}

.frontier {
  fill: none;
  stroke: #666;
}

.route, .route-core {
  fill: none;
  stroke: #4a9bf0;
  stroke-width: 6;
  stroke-linejoin: round;
  opacity: 0.8;
}

.route-core {
  stroke: #3d83c4;
  stroke-width: 3;
  opacity: 0.6;
}

.dots {
  fill: #fff;
  stroke: #333;
}

.map-canvas text {
  font-family: Roboto, sans-serif;
  text-anchor: middle;
  paint-order: stroke;
  stroke: rgba(255, 255, 255, 0.8);
  stroke-width: 2px;
  stroke-linejoin: round;
}

.state {
  font-size: 12px;
  font-weight: 500;
  fill: #50585a;
}

.city {
  font-size: 14px;
  font-weight: 500;
  fill: #202124;
}

.city .small {
  font-size: 11px;
}

.city .bold {
  font-size: 13px;
  font-weight: 700;
}

.country {
  font-size: 19px;
  font-weight: 700;
  fill: #111;
}

.map-canvas .sea text {
  font-size: 11px;
  fill: #2b63c6;
  stroke: none;
}

.pin path {
  fill: #ea4335;
  stroke: #b31412;
  stroke-width: 0.6;
}

.map-canvas .pin text {
  font-size: 14px;
  stroke: none;
}

.map-type {
  position: absolute;
  top: 9px;
  left: 9px;
  display: flex;
  border-radius: 2px;
  background-color: #fff;
  box-shadow: 0 1px 4px rgba(0, 0, 0, 0.3);
}

.map-type button {
  height: 39px;
  padding: 0 22px;
  font: 18px Roboto, sans-serif;
  color: #565656;
}

.map-type .active {
  border-right: 1px solid #eee;
  font-weight: 500;
  color: #000;
}

.map-tools {
  position: absolute;
  right: 10px;
  bottom: 24px;
  display: flex;
  flex-direction: column;
  gap: 31px;
}

.map-tools button {
  display: flex;
  justify-content: center;
  align-items: center;
  width: 39px;
  height: 39px;
}

.pegman, .zoom {
  border-radius: 2px;
  background-color: #fff;
  box-shadow: 0 1px 4px rgba(0, 0, 0, 0.3);
}

.zoom button + button {
  border-top: 1px solid #e6e6e6;
}

.google {
  position: absolute;
  left: 9px;
  bottom: 2px;
  font: 500 18px/22px Jost, Lato, sans-serif;
  text-shadow: 0 0 1px #fff, 0 0 2px #fff;
}

.google .b {
  color: #4285f4;
}

.google .r {
  color: #ea4335;
}

.google .y {
  color: #fbbc05;
}

.google .g {
  color: #34a853;
}

.map-legal {
  position: absolute;
  right: 0;
  bottom: 0;
  display: flex;
  font-size: 10px;
  line-height: 13px;
  color: #000;
}

.map-legal > * {
  padding: 0 4px;
  background-color: rgba(245, 245, 245, 0.75);
}

.map-legal > * + * {
  margin-left: 1px;
}

.map-legal button {
  font: 10px/13px Roboto, sans-serif;
}

/* donor details */
.donor {
  border: 1px solid #eaf0f8;
  border-radius: 16px;
  overflow: hidden;
  background-color: #fff;
  box-shadow: 0 0 15px rgba(0, 0, 0, 0.25);
}

.donor-head {
  display: flex;
  justify-content: space-between;
  height: 43px;
  padding: 0 8px 0 10px;
  background-color: #eaf0f8;
}

.donor-head h2 {
  font-size: 17px;
  font-weight: 400;
  line-height: 42px;
}

.donor-head button {
  height: 34px;
}

.donor-row {
  display: grid;
  grid-template-columns: repeat(6, 1fr);
  margin-right: 3px;
  padding: 6px 0 10px;
  font-size: 16px;
}

.donor-row:nth-of-type(even) {
  background-color: #fbfbfb;
}

.donor-row div {
  padding-left: 23px;
  white-space: nowrap;
}

.donor-row dt {
  line-height: 21px;
  color: #6299d8;
}

.donor-row dd {
  margin-top: 4px;
  line-height: 22px;
  color: #555;
}
```
